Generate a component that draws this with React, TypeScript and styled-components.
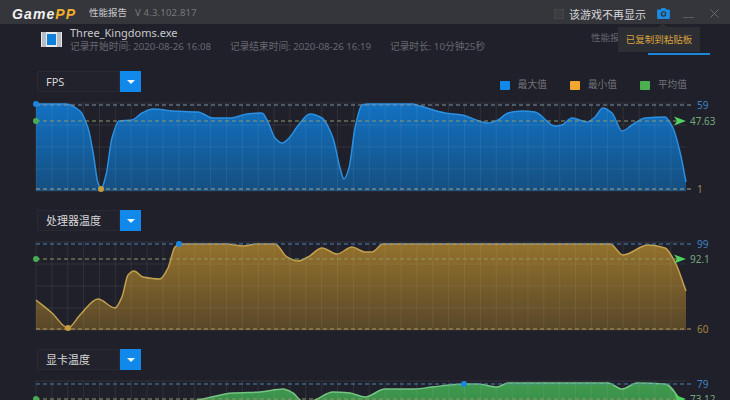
import styled, { createGlobalStyle } from "styled-components";

const GlobalStyle = createGlobalStyle`
    html, body {
        margin: 0;
        background: #1f2029;
    }
`;

type Point = [number, number];

interface ChartData {
    id: string;
    label: string;
    top: number;
    gridTop: number;
    gridBottom: number;
    maxY: number;
    avgY: number;
    minY: number;
    maxText: string;
    avgText: string;
    minText: string;
    maxDot: Point;
    minDot: Point;
    fillTop: string;
    fillBottom: string;
    stroke: string;
    maxColor: string;
    minColor: string;
    minTextColor: string;
    points: Point[];
}

const CHARTS: ChartData[] = [
    {
        id: "fps",
        label: "FPS",
        top: 97,
        gridTop: 103,
        gridBottom: 191,
        maxY: 105,
        avgY: 121,
        minY: 189,
        maxText: "59",
        avgText: "47.63",
        minText: "1",
        maxDot: [36, 104],
        minDot: [101, 189],
        fillTop: "#1271c2",
        fillBottom: "#154f80",
        stroke: "#2c8fe0",
        maxColor: "#7f93a8",
        minColor: "#a8a595",
        minTextColor: "#a08a58",
        points: [
            [36, 104], [66, 104], [80, 111], [88, 128], [93, 152], [98, 183], [101, 189], [106, 175],
            [112, 138], [119, 121], [132, 120], [142, 113], [153, 109], [173, 111], [198, 112],
            [213, 118], [230, 118], [247, 114], [262, 113], [268, 122], [275, 138], [282, 143],
            [290, 137], [297, 127], [310, 114], [322, 118], [333, 138], [340, 168], [344, 179],
            [349, 168], [355, 128], [362, 105], [368, 104], [412, 104], [420, 106], [445, 113],
            [462, 115], [488, 123], [498, 120], [508, 113], [522, 111], [535, 112], [555, 126],
            [562, 125], [572, 118], [587, 122], [595, 117], [603, 108], [612, 113], [622, 131],
            [632, 125], [645, 118], [665, 117], [673, 128], [680, 152], [686, 182],
        ],
    },
    {
        id: "cpu",
        label: "处理器温度",
        top: 236,
        gridTop: 242,
        gridBottom: 330,
        maxY: 244,
        avgY: 259,
        minY: 329,
        maxText: "99",
        avgText: "92.1",
        minText: "60",
        maxDot: [179, 244],
        minDot: [68, 328],
        fillTop: "#94722c",
        fillBottom: "#584729",
        stroke: "#c2a050",
        maxColor: "#4d82b8",
        minColor: "#b49a5c",
        minTextColor: "#a5843f",
        points: [
            [36, 300], [52, 313], [68, 328], [80, 315], [98, 299], [115, 308], [122, 297], [128, 275],
            [134, 271], [143, 277], [160, 279], [168, 268], [175, 247], [180, 244], [227, 244],
            [243, 246], [257, 244], [275, 244], [287, 257], [298, 261], [308, 257], [322, 248],
            [337, 254], [352, 247], [365, 252], [372, 252], [383, 244], [610, 244], [623, 255],
            [648, 245], [665, 248], [675, 262], [686, 291],
        ],
    },
    {
        id: "gpu",
        label: "显卡温度",
        top: 375,
        gridTop: 381,
        gridBottom: 469,
        maxY: 384,
        avgY: 399,
        minY: 467,
        maxText: "79",
        avgText: "73.12",
        minText: "60",
        maxDot: [464, 384],
        minDot: [68, 467],
        fillTop: "#3f9a4e",
        fillBottom: "#2c6b3a",
        stroke: "#74c584",
        maxColor: "#4d82b8",
        minColor: "#5f9a68",
        minTextColor: "#5f9a68",
        points: [
            [36, 406], [120, 406], [180, 403], [203, 399], [233, 393], [260, 392], [283, 389],
            [293, 393], [300, 400], [307, 403], [315, 400], [333, 392], [350, 393], [365, 397],
            [385, 389], [415, 389], [432, 387], [464, 384], [478, 384], [497, 387], [508, 383],
            [608, 383], [622, 389], [637, 383], [665, 384], [680, 400], [686, 415],
        ],
    },
];

const LEFT = 36;
const RIGHT = 686;

// monotone cubic, so the long flat runs at the top don't overshoot
function smoothLine(pts: Point[]) {
    const slopes = pts.slice(1).map((p, i) => (p[1] - pts[i][1]) / (p[0] - pts[i][0]));
    const tangents = pts.map((_, i) => {
        if (i === 0) return slopes[0];
        if (i === pts.length - 1) return slopes[i - 1];
        const a = slopes[i - 1];
        const b = slopes[i];
        if (a * b <= 0) return 0;
        return (2 * a * b) / (a + b);
    });

    let d = `M${pts[0][0]} ${pts[0][1]}`;
    for (let i = 0; i < pts.length - 1; i++) {
        const [x1, y1] = pts[i];
        const [x2, y2] = pts[i + 1];
        const dx = (x2 - x1) / 3;
        const c1y = (y1 + tangents[i] * dx).toFixed(1);
        const c2y = (y2 - tangents[i + 1] * dx).toFixed(1);
        d += ` C${(x1 + dx).toFixed(1)} ${c1y} ${(x2 - dx).toFixed(1)} ${c2y} ${x2} ${y2}`;
    }
    return d;
}

const Page = styled.div`
    position: relative;
    width: 730px;
    height: 400px;
    overflow: hidden;
    background: #1f2029;
    color: #d8d8dc;
    font-family: "Noto Sans", "Noto Sans CJK SC", sans-serif;
`;

const TitleBar = styled.div`
    display: flex;
    align-items: center;
    height: 24px;
    padding: 0 11px 0 12px;
    background: #35363b;
`;

const Logo = styled.span`
    padding-top: 3px;
    font-family: "Liberation Sans", sans-serif;
    font-size: 14px;
    font-weight: 700;
    font-style: italic;
    letter-spacing: 1.1px;
    color: #f1f1f1;
    width: 77px;
`;

const LogoAccent = styled.span`
    color: #f3b02d;
`;

const TitleText = styled.span`
    font-size: 9.5px;
    color: #c6c7cb;
    width: 46px;
`;

const VersionText = styled.span`
    font-size: 9.5px;
    color: #77787d;
    letter-spacing: 0.2px;
`;

const TitleRight = styled.div`
    display: flex;
    align-items: center;
    margin-left: auto;
    padding-top: 3px;
`;

const CheckBox = styled.span`
    width: 10px;
    height: 10px;
    box-sizing: border-box;
    background: #3c3d41;
    border: 1px solid #45464a;
    margin-right: 5px;
`;

const CheckText = styled.span`
    font-size: 11px;
    color: #d4d5d8;
    width: 88px;
`;

const WindowIcon = styled.svg<{ $gap?: number }>`
    display: block;
    flex: none;
    margin-right: ${p => p.$gap ?? 0}px;
`;

const InfoRow = styled.div`
    display: flex;
    height: 47px;
    padding: 2px 20px 0 41px;
    box-sizing: border-box;
`;

const Thumb = styled.svg`
    flex: none;
    margin: 6px 8px 0 0;
`;

const FileBlock = styled.div`
    display: flex;
    flex-direction: column;
    flex: 1;
`;

const FileName = styled.div`
    font-size: 11px;
    line-height: 14px;
    color: #c8c9cd;
`;

const MetaRow = styled.div`
    display: flex;
    font-size: 9.7px;
    line-height: 13px;
    color: #676870;
`;

const MetaItem = styled.span<{ $width: number }>`
    width: ${p => p.$width}px;
`;

const Tab = styled.div<{ $width: number; $active?: boolean }>`
    align-self: flex-start;
    width: ${p => p.$width}px;
    height: 29px;
    padding-top: 5px;
    font-size: 9.5px;
    line-height: 14px;
    color: #65666d;
    box-sizing: border-box;
    border-bottom: 2px solid ${p => (p.$active ? "#1b87d9" : "transparent")};
`;

const Tooltip = styled.div`
    position: absolute;
    left: 618px;
    top: 27px;
    width: 82px;
    height: 25px;
    line-height: 25px;
    text-align: center;
    background: #2d2e33;
    color: #d8a23f;
    font-size: 9.5px;

    &::before {
        content: "";
        position: absolute;
        left: 41px;
        top: -4px;
        border-left: 4px solid transparent;
        border-right: 4px solid transparent;
        border-bottom: 4px solid #2d2e33;
    }
`;

const Section = styled.section`
    height: 139px;
`;

const SectionHead = styled.div`
    display: flex;
    align-items: flex-start;
    height: 22px;
    padding: 0 43px 0 37px;
`;

const SelectBox = styled.div`
    width: 83px;
    height: 21px;
    padding-left: 8px;
    box-sizing: border-box;
    background: #21222b;
    border: 1px solid #282933;
    font-size: 11px;
    line-height: 20px;
    color: #d6d7da;
`;

const SelectButton = styled.div`
    display: flex;
    align-items: center;
    justify-content: center;
    width: 21px;
    height: 21px;
    background: #1089ea;

    &::after {
        content: "";
        border-left: 4px solid transparent;
        border-right: 4px solid transparent;
        border-top: 4px solid #eef6fd;
    }
`;

const Legend = styled.div`
    display: flex;
    align-items: center;
    gap: 23px;
    margin: 7px 0 0 auto;
`;

const LegendItem = styled.div`
    display: flex;
    align-items: center;
    gap: 8px;
    font-size: 9.7px;
    line-height: 14px;
    color: #72737a;
`;

const Swatch = styled.span<{ $color: string }>`
    width: 10px;
    height: 9px;
    border-radius: 1px;
    background: ${p => p.$color};
`;

const ChartSvg = styled.svg`
    display: block;
    margin-top: 4px;
`;

const GridLine = styled.line`
    stroke: rgba(200, 205, 220, 0.1);
    stroke-width: 1;
`;

const DashLine = styled.line<{ $color: string }>`
    stroke: ${p => p.$color};
    stroke-width: 1;
    stroke-dasharray: 4 3;
`;

const ValueText = styled.text<{ $color: string }>`
    font-family: "Noto Sans", sans-serif;
    font-size: 10px;
    fill: ${p => p.$color};
`;

function Chart({ chart }: { chart: ChartData }) {
    const { top, gridTop, gridBottom, points, id } = chart;
    const line = smoothLine(points);
    const area = `${line} L${RIGHT} ${gridBottom} L${LEFT} ${gridBottom} Z`;
    const verticals = Array.from({ length: 41 }, (_, i) => LEFT + i * 15.87);
    const horizontals = [0, 1, 2, 3, 4].map(i => gridTop + i * 22);

    return (
        <ChartSvg width={730} height={100} viewBox={`0 ${top} 730 100`}>
            <defs>
                <linearGradient id={`fill-${id}`} x1="0" y1="0" x2="0" y2="1">
                    <stop offset="0" stopColor={chart.fillTop} />
                    <stop offset="1" stopColor={chart.fillBottom} />
                </linearGradient>
            </defs>
            <path d={area} fill={`url(#fill-${id})`} />
            {verticals.map(x => (
                <GridLine key={x} x1={x} x2={x} y1={gridTop} y2={gridBottom} />
            ))}
            {horizontals.map(y => (
                <GridLine key={y} x1={LEFT} x2={RIGHT} y1={y} y2={y} />
            ))}
            <path d={line} fill="none" stroke={chart.stroke} strokeWidth={1.5} />
            <DashLine $color={chart.maxColor} x1={LEFT} x2={692} y1={chart.maxY} y2={chart.maxY} />
            <DashLine $color="#8f9a6c" x1={LEFT} x2={686} y1={chart.avgY} y2={chart.avgY} />
            <DashLine $color={chart.minColor} x1={LEFT} x2={692} y1={chart.minY} y2={chart.minY} />
            <circle cx={chart.maxDot[0]} cy={chart.maxDot[1]} r={3} fill="#1c86dc" />
            <circle cx={LEFT} cy={chart.avgY} r={3} fill="#49ab55" />
            <circle cx={chart.minDot[0]} cy={chart.minDot[1]} r={3} fill="#c69c3c" />
            <path
                d={`M674 ${chart.avgY - 4.5} L686 ${chart.avgY} L674 ${chart.avgY + 4.5} L677 ${chart.avgY} Z`}
                fill="#4fd25f"
            />
            <ValueText $color="#3f83c6" x={697} y={chart.maxY + 3.5}>
                {chart.maxText}
            </ValueText>
            <ValueText $color="#74a87c" x={690} y={chart.avgY + 3.5}>
                {chart.avgText}
            </ValueText>
            <ValueText $color={chart.minTextColor} x={697} y={chart.minY + 3.5}>
                {chart.minText}
            </ValueText>
        </ChartSvg>
    );
}

export default function App() {
    return (
        <Page>
            <GlobalStyle />
            <TitleBar>
                <Logo>
                    Game<LogoAccent>PP</LogoAccent>
                </Logo>
                <TitleText>性能报告</TitleText>
                <VersionText>V 4.3.102.817</VersionText>
                <TitleRight>
                    <CheckBox />
                    <CheckText>该游戏不再显示</CheckText>
                    <WindowIcon $gap={13} width={13} height={11} viewBox="0 0 14 12">
                        <path
                            fillRule="evenodd"
                            d="M4 1.5 L5 0 H9 L10 1.5 H13 Q14 1.5 14 2.5 V11 Q14 12 13 12 H1 Q0 12 0 11 V2.5 Q0 1.5 1 1.5 Z M7 3.5 A3 3 0 1 0 7 9.5 A3 3 0 1 0 7 3.5 Z"
                            fill="#1a8be0"
                        />
                        <circle cx={7} cy={6.5} r={1.6} fill="#1a8be0" />
                    </WindowIcon>
                    <WindowIcon $gap={16} width={11} height={10} viewBox="0 0 11 10">
                        <path d="M0 8.5 H11" stroke="#5c5d62" strokeWidth={1} />
                    </WindowIcon>
                    <WindowIcon width={9} height={9} viewBox="0 0 9 9">
                        <path d="M0.5 0.5 L8.5 8.5 M8.5 0.5 L0.5 8.5" stroke="#6a6b70" strokeWidth={1} />
                    </WindowIcon>
                </TitleRight>
            </TitleBar>
            <InfoRow>
                <Thumb width={21} height={15} viewBox="0 0 21 15">
                    <rect width={21} height={15} fill="#e6e8ea" />
                    <rect x={1} width={4} height={15} fill="#b9bcc0" />
                    <rect x={16} width={4} height={15} fill="#b9bcc0" />
                    <rect x={6} y={2} width={9} height={11} fill="#0f7fdc" />
                </Thumb>
                <FileBlock>
                    <FileName>Three_Kingdoms.exe</FileName>
                    <MetaRow>
                        <MetaItem $width={160}>记录开始时间: 2020-08-26 16:08</MetaItem>
                        <MetaItem $width={160}>记录结束时间: 2020-08-26 16:19</MetaItem>
                        <MetaItem $width={110}>记录时长: 10分钟25秒</MetaItem>
                    </MetaRow>
                </FileBlock>
                <Tab $width={57}>性能报告</Tab>
                <Tab $width={62} $active />
            </InfoRow>
            {CHARTS.map((chart, i) => (
                <Section key={chart.id}>
                    <SectionHead>
                        <SelectBox>{chart.label}</SelectBox>
                        <SelectButton />
                        {i === 0 && (
                            <Legend>
                                <LegendItem>
                                    <Swatch $color="#1089ea" />
                                    最大值
                                </LegendItem>
                                <LegendItem>
                                    <Swatch $color="#f2a72e" />
                                    最小值
                                </LegendItem>
                                <LegendItem>
                                    <Swatch $color="#4caf50" />
                                    平均值
                                </LegendItem>
                            </Legend>
                        )}
                    </SectionHead>
                    <Chart chart={chart} />
                </Section>
            ))}
            <Tooltip>已复制到粘贴板</Tooltip>
        </Page>
    );
}
